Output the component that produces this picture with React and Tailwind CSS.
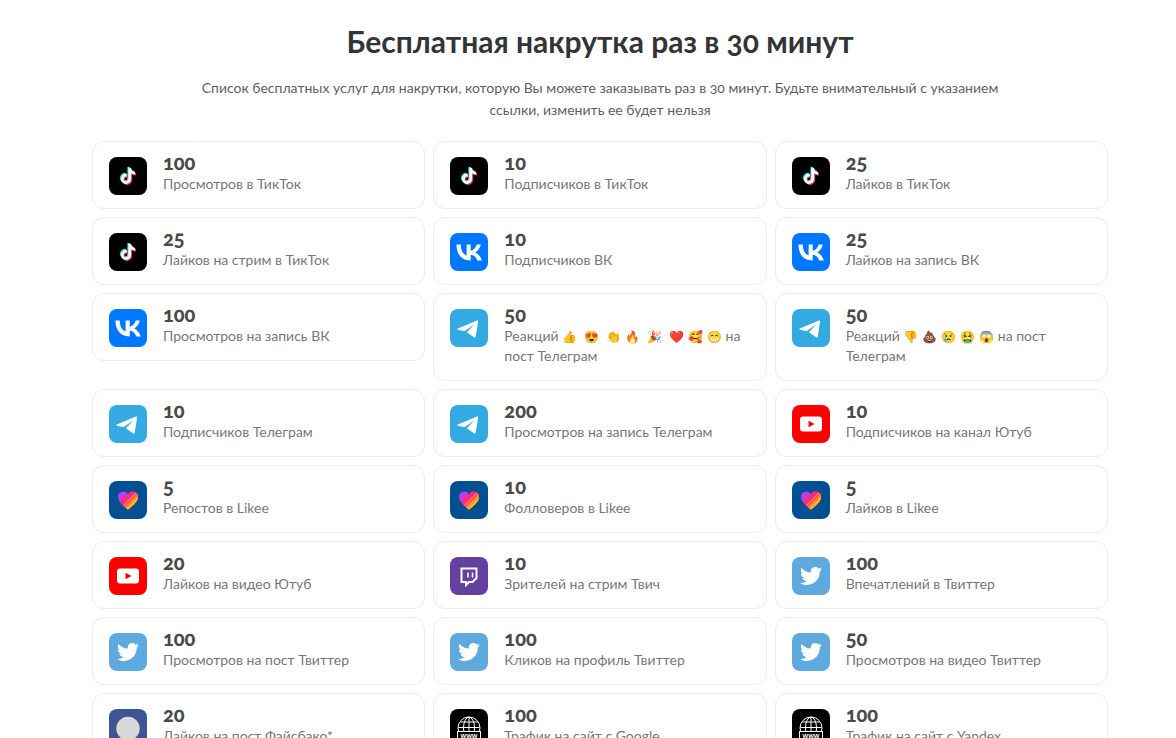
import React from "react";
import { FaTiktok, FaTwitter } from "react-icons/fa";

const TiktokIcon = () => (
  <span className="flex size-full items-center justify-center bg-black">
    <span className="relative size-4">
      <FaTiktok className="absolute -top-px -left-px size-4 text-[#25f4ee]" />
      <FaTiktok className="absolute top-px left-px size-4 text-[#fe2c55]" />
      <FaTiktok className="absolute top-0 left-0 size-4 text-white" />
    </span>
  </span>
);

const VkIcon = () => (
  <svg viewBox="0 0 24 24" className="size-full bg-[#0077ff]">
    <path
      fill="#fff"
      d="M6.79 7.3H4.05c.13 6.24 3.25 9.99 8.72 9.99h.31v-3.57c2.01.2 3.53 1.67 4.14 3.57h2.84c-.78-2.84-2.83-4.41-4.11-5.01 1.28-.74 3.08-2.54 3.51-4.98h-2.58c-.56 1.98-2.22 3.78-3.8 3.95V7.3H10.5v6.92c-1.6-.4-3.62-2.34-3.71-6.92Z"
    />
  </svg>
);

const TelegramIcon = () => (
  <svg viewBox="0 0 38 38" className="size-full bg-[#34aae2]">
    <path
      fill="#fff"
      d="M7.8 19.6 27 11.5q1.2-.4 1.1.9L25.8 27.4q-.4 1.7-1.9.8l-7-5 7.6-8-10.2 7-6.3-1.4q-1.3-.5-.2-1.2Z"
    />
  </svg>
);

const YoutubeIcon = () => (
  <svg viewBox="0 0 38 38" className="size-full bg-[#ff0000]">
    <rect x="8" y="11.5" width="22" height="15" rx="3" fill="#fff" />
    <path fill="#f00" d="m16.5 15.8 6 3.2-6 3.2Z" />
  </svg>
);

const LikeeIcon = () => (
  <svg viewBox="0 0 38 38" className="size-full bg-[#034f93]">
    <clipPath id="likee-heart">
      <path d="M19 28.5C14 24.4 9 20.5 9 16a5.2 5.2 0 0 1 10-2.2A5.2 5.2 0 0 1 29 16c0 4.5-5 8.4-10 12.5Z" />
    </clipPath>
    <g clipPath="url(#likee-heart)">
      <path fill="#b83cf5" d="M5 5h28v28H5z" />
      <path fill="#fb2a7b" d="M9 22 24 7h14v30H9z" />
      <path fill="#ff7a4d" d="M11 27 28 10h10v30H11z" />
      <path fill="#fb4a5c" d="M12 28 28 12h11v28H12z" />
      <path fill="#ff8a3c" d="M12 30 29 13h11v28H12z" />
      <path fill="#ffb90a" d="M13 32 30 15h10v28H13z" />
    </g>
  </svg>
);

const TwitchIcon = () => (
  <svg viewBox="0 0 38 38" className="size-full bg-[#6441a0]">
    <g fill="none" stroke="#fff" strokeWidth="2">
      <path d="M11.5 11.5h15v9.5l-4 4h-3.5l-3 3v-3h-4.5V11.5Z" />
      <path d="M18 15.5v5M22.5 15.5v5" strokeWidth="1.6" />
    </g>
  </svg>
);

const TwitterIcon = () => (
  <span className="flex size-full items-center justify-center bg-[#5eaade]">
    <FaTwitter className="size-[22px] text-white" />
  </span>
);

const FacebookIcon = () => (
  <svg viewBox="0 0 38 38" className="size-full bg-[#3d5593]">
    <circle cx="19" cy="19.5" r="11.7" fill="#d8d8d8" />
  </svg>
);

const WebIcon = () => (
  <svg viewBox="0 0 38 38" className="size-full bg-black">
    <g fill="none" stroke="#fff" strokeWidth="1">
      <circle cx="19" cy="19" r="11" />
      <ellipse cx="19" cy="19" rx="5.5" ry="11" />
      <path d="M19 8v22M10.5 13h17M8.5 18.5h21M10.5 25h17" />
    </g>
    <rect x="7.5" y="22.5" width="23" height="8" fill="#000" stroke="#fff" />
    <text
      x="19"
      y="29"
      textAnchor="middle"
      fill="#fff"
      className="font-['Liberation_Sans'] text-[6px] font-bold"
    >
      WWW
    </text>
  </svg>
);

// reactions are shown between "Реакций" and "на пост"
const services = [
  { icon: TiktokIcon, count: 100, title: "Просмотров в ТикТок" },
  { icon: TiktokIcon, count: 10, title: "Подписчиков в ТикТок" },
  { icon: TiktokIcon, count: 25, title: "Лайков в ТикТок" },
  { icon: TiktokIcon, count: 25, title: "Лайков на стрим в ТикТок" },
  { icon: VkIcon, count: 10, title: "Подписчиков ВК" },
  { icon: VkIcon, count: 25, title: "Лайков на запись ВК" },
  { icon: VkIcon, count: 100, title: "Просмотров на запись ВК" },
  {
    icon: TelegramIcon,
    count: 50,
    title: "Реакций",
    reactions: "👍\u2004 😍\u2004 👏\u2004🔥\u2004 🎉\u2004 ❤️\u2004🥰\u2004😁",
    target: "на пост Телеграм",
  },
  {
    icon: TelegramIcon,
    count: 50,
    title: "Реакций",
    reactions: "👎\u2004💩\u2004😢\u2004🤮\u2004😱",
    target: "на пост Телеграм",
  },
  { icon: TelegramIcon, count: 10, title: "Подписчиков Телеграм" },
  { icon: TelegramIcon, count: 200, title: "Просмотров на запись Телеграм" },
  { icon: YoutubeIcon, count: 10, title: "Подписчиков на канал Ютуб" },
  { icon: LikeeIcon, count: 5, title: "Репостов в Likee" },
  { icon: LikeeIcon, count: 10, title: "Фолловеров в Likee" },
  { icon: LikeeIcon, count: 5, title: "Лайков в Likee" },
  { icon: YoutubeIcon, count: 20, title: "Лайков на видео Ютуб" },
  { icon: TwitchIcon, count: 10, title: "Зрителей на стрим Твич" },
  { icon: TwitterIcon, count: 100, title: "Впечатлений в Твиттер" },
  { icon: TwitterIcon, count: 100, title: "Просмотров на пост Твиттер" },
  { icon: TwitterIcon, count: 100, title: "Кликов на профиль Твиттер" },
  { icon: TwitterIcon, count: 50, title: "Просмотров на видео Твиттер" },
  { icon: FacebookIcon, count: 20, title: "Лайков на пост Файсбако*" },
  { icon: WebIcon, count: 100, title: "Трафик на сайт с Google" },
  { icon: WebIcon, count: 100, title: "Трафик на сайт с Yandex" },
];

const ServiceCard = ({ service }) => {
  const Icon = service.icon;

  return (
    <a
      href="#order"
      className="flex gap-4 rounded-xl border border-[#ebebeb] bg-white px-4 pt-[15px] pb-3"
    >
      <span className="size-[38px] shrink-0 overflow-hidden rounded-lg">
        <Icon />
      </span>
      <span className="-mt-[5px] flex flex-col">
        <span className="text-xl leading-5 font-black text-[#4a4a4a] oldstyle-nums">
          {service.count}
        </span>
        <span className="mt-[2px] pb-[2px] text-sm leading-5 text-[#777]">
          {service.title}
          {service.reactions && (
            <>
              {" "}
              <span className="text-xs leading-4">{service.reactions}</span>{" "}
              {service.target}
            </>
          )}
        </span>
      </span>
    </a>
  );
};

const App = () => {
  return (
    <main className="h-screen overflow-hidden bg-white pt-[23px] pr-[68px] pl-[92px] font-['Lato','Noto_Color_Emoji',sans-serif]">
      <h1 className="text-center text-3xl leading-9 font-bold text-[#323537] oldstyle-nums">
        Бесплатная накрутка раз в 30 минут
      </h1>
      <p className="mx-auto mt-[18px] max-w-[840px] text-center text-sm leading-[22px] text-[#5c5f62] oldstyle-nums">
        Список бесплатных услуг для накрутки, которую Вы можете заказывать раз в
        30 минут. Будьте внимательный с указанием ссылки, изменить ее будет
        нельзя
      </p>
      <ul className="mt-5 grid grid-cols-3 items-start gap-2">
        {services.map((service, index) => (
          <li key={index}>
            <ServiceCard service={service} />
          </li>
        ))}
      </ul>
    </main>
  );
};

export default App;
